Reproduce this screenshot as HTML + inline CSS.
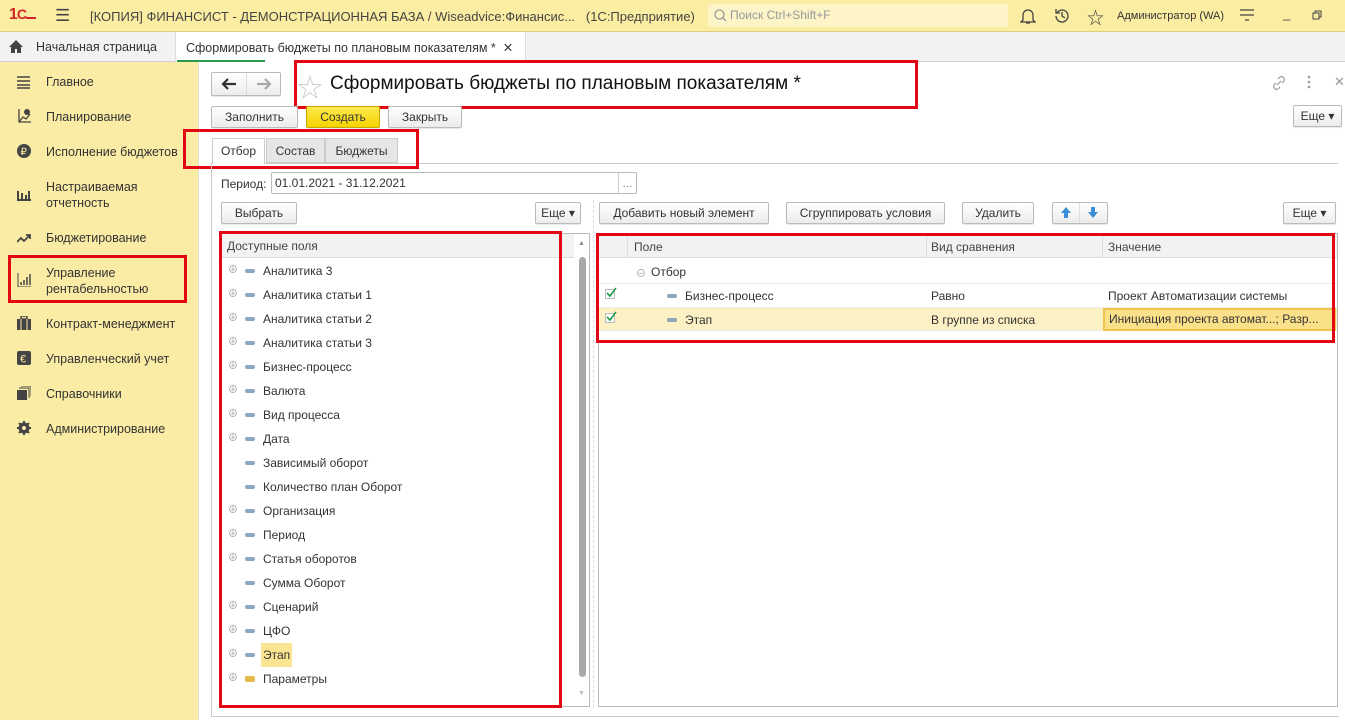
<!DOCTYPE html>
<html><head><meta charset="utf-8">
<style>
*{box-sizing:border-box;margin:0;padding:0}
body{width:1345px;height:720px;overflow:hidden;position:relative;background:#fff;font-family:"Liberation Sans","Noto Sans CJK SC",sans-serif;font-size:12px;color:#333}
.a{position:absolute}
.top{left:0;top:0;width:1345px;height:32px;background:#fbeda2;border-bottom:1px solid #e0cf80}
.tabs{left:0;top:32px;width:1345px;height:30px;background:#f2f2f2;border-bottom:1px solid #d0d0d0}
.side{left:0;top:62px;width:199px;height:658px;background:#fbeca5;border-right:1px solid #ddd}
.si{position:absolute;left:46px;font-size:12.5px;color:#333;line-height:16px}
.ic{position:absolute;left:17px;width:14px;height:14px}
.btn{position:absolute;height:22px;border:1px solid #bbb;border-radius:2px;background:linear-gradient(#fff,#ececec);font-size:12px;line-height:20px;text-align:center;color:#333;box-shadow:0 1px 1px rgba(0,0,0,.1)}
.red{position:absolute;border:3px solid #e30613}
.row{position:absolute;left:228px;height:24px;line-height:24px;font-size:12px}
.pl{position:absolute;left:0;color:#999;font-size:10px}
.dash{position:absolute;left:17px;top:10px;width:10px;height:4px;border-radius:2px;background:#8aa7bf}
.txt{position:absolute;left:35px;white-space:nowrap}
</style></head><body>
<div class="a top">
  <div class="a" style="left:9px;top:6px;color:#d0262a;font-weight:bold;font-size:16px;letter-spacing:-1px">1<span style="font-size:14px">C</span><span style="display:inline-block;width:10px;border-bottom:2px solid #d0262a"></span></div>
  <div class="a" style="left:55px;top:6px;font-size:17px;color:#444">☰</div>
  <div class="a" style="left:90px;top:9px;font-size:13px;color:#444">[КОПИЯ] ФИНАНСИСТ - ДЕМОНСТРАЦИОННАЯ БАЗА / Wiseadvice:Финансис...&nbsp;&nbsp;&nbsp;(1С:Предприятие)</div>
  <div class="a" style="left:708px;top:4px;width:300px;height:23px;background:#fdf4c8;border-radius:3px;color:#999;font-size:12px;line-height:23px;padding-left:22px">Поиск Ctrl+Shift+F
    <svg class="a" style="left:6px;top:5px" width="13" height="13"><circle cx="5.5" cy="5.5" r="4.5" fill="none" stroke="#999" stroke-width="1.3"/><path d="M9 9l3 3" stroke="#999" stroke-width="1.3"/></svg></div>
  <svg class="a" style="left:1020px;top:7px" width="16" height="18"><path d="M3 13V8a5 5 0 0110 0v5l2 2H1z M6 16h4" fill="none" stroke="#444" stroke-width="1.3"/></svg>
  <svg class="a" style="left:1053px;top:7px" width="18" height="18"><path d="M3 9a6 6 0 106-6 6 6 0 00-5 3 M3 2v4h4 M9 5v4l3 2" fill="none" stroke="#444" stroke-width="1.3"/></svg>
  <div class="a" style="left:1087px;top:4px;font-size:17px;color:#444">☆</div>
  <div class="a" style="left:1117px;top:10px;font-size:11px;color:#333">Администратор (WA)</div>
  <svg class="a" style="left:1240px;top:8px" width="14" height="16"><path d="M0 2h14M0 7h14M5 12h4" stroke="#444" stroke-width="1.3"/></svg>
  <div class="a" style="left:1283px;top:6px;font-size:13px;color:#444">_</div>
  <svg class="a" style="left:1312px;top:10px" width="10" height="10"><rect x="1" y="3" width="6" height="6" fill="none" stroke="#444"/><path d="M3 3V1h6v6H7" fill="none" stroke="#444"/></svg>
</div>
<div class="a tabs">
  <svg class="a" style="left:9px;top:8px" width="14" height="13"><path d="M7 0L0 7h2v6h4V9h2v4h4V7h2z" fill="#444"/></svg>
  <div class="a" style="left:36px;top:8px;font-size:12.5px">Начальная страница</div>
  <div class="a" style="left:175px;top:0;width:351px;height:30px;background:#fff;border-left:1px solid #ddd;border-right:1px solid #ddd"></div>
  <div class="a" style="left:177px;top:28px;width:88px;height:2px;background:#2a9a4c"></div>
  <div class="a" style="left:186px;top:8px;font-size:12.5px">Сформировать бюджеты по плановым показателям *&nbsp;&nbsp;✕</div>
</div>
<div class="a side">
  <svg class="ic" style="top:13px"><path d="M0 2h13M0 6h13M0 10h13M0 13h13" stroke="#444" stroke-width="1.6"/></svg><div class="si" style="top:12px">Главное</div>
  <svg class="ic" style="top:47px"><path d="M2 0v13h12M2 13l4-5 3 2 4-5" fill="none" stroke="#444" stroke-width="1.3"/><circle cx="10" cy="3" r="3" fill="#444"/></svg><div class="si" style="top:47px">Планирование</div>
  <svg class="ic" style="top:82px"><circle cx="7" cy="7" r="7" fill="#444"/><text x="3.5" y="11" font-size="10" fill="#fbeca5" font-family="Liberation Sans">₽</text></svg><div class="si" style="top:82px">Исполнение бюджетов</div>
  <svg class="ic" style="top:125px"><path d="M1 4v9M5 6v7M9 8v5M12 4v9M0 13h14" stroke="#444" stroke-width="2"/></svg><div class="si" style="top:117px">Настраиваемая<br>отчетность</div>
  <svg class="ic" style="top:169px"><path d="M0 11l4-4 3 3 6-6M9 4h4v4" fill="none" stroke="#444" stroke-width="1.8"/></svg><div class="si" style="top:168px">Бюджетирование</div>
  <svg class="ic" style="top:211px"><path d="M1 0v14h13" fill="none" stroke="#444"/><path d="M4 12v-3M7 12v-5M10 12V4M13 12V1" stroke="#444" stroke-width="1.5"/></svg><div class="si" style="top:203px">Управление<br>рентабельностью</div>
  <svg class="ic" style="top:254px"><rect x="0" y="3" width="14" height="11" fill="#444"/><rect x="4" y="0" width="6" height="3" fill="none" stroke="#444" stroke-width="1.5"/><path d="M4 3v11M10 3v11" stroke="#fbeca5"/></svg><div class="si" style="top:254px">Контракт-менеджмент</div>
  <svg class="ic" style="top:289px"><rect width="14" height="14" rx="2" fill="#444"/><text x="3" y="11.5" font-size="11" fill="#fbeca5" font-family="Liberation Sans">€</text></svg><div class="si" style="top:289px">Управленческий учет</div>
  <svg class="ic" style="top:324px"><rect x="0" y="4" width="10" height="10" fill="#444"/><path d="M2 2h10v10M4 0h10v10" fill="none" stroke="#444"/></svg><div class="si" style="top:324px">Справочники</div>
  <svg class="ic" style="top:359px"><circle cx="7" cy="7" r="4" fill="none" stroke="#444" stroke-width="3"/><path d="M7 0v14M0 7h14M2 2l10 10M12 2L2 12" stroke="#444" stroke-width="2"/><circle cx="7" cy="7" r="2" fill="#fbeca5"/></svg><div class="si" style="top:359px">Администрирование</div>
</div>
<div class="red" style="left:8px;top:255px;width:179px;height:48px"></div>

<!-- form header -->
<div class="btn" style="left:211px;top:72px;width:70px;height:24px"></div>
<div class="a" style="left:246px;top:73px;width:1px;height:22px;background:#ddd"></div>
<svg class="a" style="left:221px;top:78px" width="16" height="12"><path d="M15 6H3M7 1L2 6l5 5" fill="none" stroke="#333" stroke-width="2.2"/></svg>
<svg class="a" style="left:256px;top:78px" width="16" height="12"><path d="M1 6h12M9 1l5 5-5 5" fill="none" stroke="#aaa" stroke-width="2.2"/></svg>
<div class="a" style="left:297px;top:68px;font-size:26px;color:#ccc">☆</div>
<div class="a" style="left:330px;top:73px;font-size:19px;color:#111">Сформировать бюджеты по плановым показателям *</div>
<div class="red" style="left:294px;top:60px;width:624px;height:49px"></div>
<svg class="a" style="left:1271px;top:75px" width="16" height="16"><path d="M6 10l4-4M7 4l2-2a3 3 0 014 4l-2 2M9 12l-2 2a3 3 0 01-4-4l2-2" fill="none" stroke="#999" stroke-width="1.2"/></svg>
<svg class="a" style="left:1307px;top:75px" width="4" height="14"><circle cx="2" cy="2" r="1.3" fill="#999"/><circle cx="2" cy="7" r="1.3" fill="#999"/><circle cx="2" cy="12" r="1.3" fill="#999"/></svg>
<div class="a" style="left:1334px;top:74px;color:#999;font-size:13px">✕</div>
<div class="btn" style="left:211px;top:106px;width:87px">Заполнить</div>
<div class="btn" style="left:306px;top:106px;width:74px;background:linear-gradient(#ffe94d,#f5d300);border-color:#c8a800">Создать</div>
<div class="btn" style="left:388px;top:106px;width:74px">Закрыть</div>
<div class="btn" style="left:1293px;top:105px;width:49px">Еще ▾</div>
<!-- tabs -->
<div class="a" style="left:211px;top:163px;width:1127px;height:1px;background:#ccc"></div>
<div class="a" style="left:212px;top:138px;width:53px;height:26px;background:#fff;border:1px solid #ccc;border-bottom:none;line-height:24px;text-align:center">Отбор</div>
<div class="a" style="left:266px;top:138px;width:59px;height:25px;background:#e6e6e6;border:1px solid #ccc;line-height:24px;text-align:center">Состав</div>
<div class="a" style="left:325px;top:138px;width:73px;height:25px;background:#e6e6e6;border:1px solid #ccc;line-height:24px;text-align:center">Бюджеты</div>
<div class="red" style="left:183px;top:129px;width:236px;height:40px"></div>
<div class="a" style="left:211px;top:164px;width:1px;height:553px;background:#ccc"></div>
<div class="a" style="left:211px;top:716px;width:1128px;height:1px;background:#ccc"></div>
<!-- period -->
<div class="a" style="left:221px;top:177px">Период:</div>
<div class="a" style="left:271px;top:172px;width:366px;height:22px;border:1px solid #bbb;border-radius:2px;line-height:20px;padding-left:3px;color:#333">01.01.2021 - 31.12.2021<span style="position:absolute;right:0;top:0;width:18px;height:20px;border-left:1px solid #ccc;text-align:center;color:#888">...</span></div>
<!-- left panel -->
<div class="btn" style="left:221px;top:202px;width:76px">Выбрать</div>
<div class="btn" style="left:535px;top:202px;width:46px">Еще ▾</div>
<div class="a" style="left:593px;top:200px;width:1px;height:508px;border-left:1px dashed #ddd"></div>
<div class="a" style="left:221px;top:233px;width:369px;height:474px;border:1px solid #bbb"></div>
<div class="a" style="left:222px;top:234px;width:352px;height:24px;background:#f2f2f2;border-bottom:1px solid #ddd;line-height:24px;padding-left:5px;color:#444">Доступные поля</div>
<div class="a" style="left:578px;top:240px;font-size:7px;color:#888">▲</div>
<div class="a" style="left:579px;top:257px;width:7px;height:420px;background:#a8a8a8;border-radius:4px"></div>
<div class="a" style="left:578px;top:690px;font-size:7px;color:#bbb">▼</div>
<div class="row" style="top:259px"><span class="pl">⊕</span><span class="dash"></span><span class="txt">Аналитика 3</span></div>
<div class="row" style="top:283px"><span class="pl">⊕</span><span class="dash"></span><span class="txt">Аналитика статьи 1</span></div>
<div class="row" style="top:307px"><span class="pl">⊕</span><span class="dash"></span><span class="txt">Аналитика статьи 2</span></div>
<div class="row" style="top:331px"><span class="pl">⊕</span><span class="dash"></span><span class="txt">Аналитика статьи 3</span></div>
<div class="row" style="top:355px"><span class="pl">⊕</span><span class="dash"></span><span class="txt">Бизнес-процесс</span></div>
<div class="row" style="top:379px"><span class="pl">⊕</span><span class="dash"></span><span class="txt">Валюта</span></div>
<div class="row" style="top:403px"><span class="pl">⊕</span><span class="dash"></span><span class="txt">Вид процесса</span></div>
<div class="row" style="top:427px"><span class="pl">⊕</span><span class="dash"></span><span class="txt">Дата</span></div>
<div class="row" style="top:451px"><span class="dash"></span><span class="txt">Зависимый оборот</span></div>
<div class="row" style="top:475px"><span class="dash"></span><span class="txt">Количество план Оборот</span></div>
<div class="row" style="top:499px"><span class="pl">⊕</span><span class="dash"></span><span class="txt">Организация</span></div>
<div class="row" style="top:523px"><span class="pl">⊕</span><span class="dash"></span><span class="txt">Период</span></div>
<div class="row" style="top:547px"><span class="pl">⊕</span><span class="dash"></span><span class="txt">Статья оборотов</span></div>
<div class="row" style="top:571px"><span class="dash"></span><span class="txt">Сумма Оборот</span></div>
<div class="row" style="top:595px"><span class="pl">⊕</span><span class="dash"></span><span class="txt">Сценарий</span></div>
<div class="row" style="top:619px"><span class="pl">⊕</span><span class="dash"></span><span class="txt">ЦФО</span></div>
<div class="row" style="top:643px"><span class="pl">⊕</span><span class="dash"></span><span class="txt" style="background:#fbe592;padding:0 2px;left:33px">Этап</span></div>
<div class="row" style="top:667px"><span class="pl">⊕</span><span class="dash" style="background:#e5b94a;height:6px;top:9px"></span><span class="txt">Параметры</span></div>
<div class="red" style="left:219px;top:231px;width:343px;height:477px"></div>
<!-- right panel -->
<div class="btn" style="left:599px;top:202px;width:170px">Добавить новый элемент</div>
<div class="btn" style="left:786px;top:202px;width:159px">Сгруппировать условия</div>
<div class="btn" style="left:962px;top:202px;width:72px">Удалить</div>
<div class="btn" style="left:1052px;top:202px;width:56px"></div>
<div class="a" style="left:1079px;top:203px;width:1px;height:20px;background:#ddd"></div>
<svg class="a" style="left:1060px;top:206px" width="12" height="13"><path d="M6 1L1 7h3v5h4V7h3z" fill="#3a8fd8"/></svg>
<svg class="a" style="left:1087px;top:206px" width="12" height="13"><path d="M6 12L1 6h3V1h4v5h3z" fill="#3a8fd8"/></svg>
<div class="btn" style="left:1283px;top:202px;width:53px">Еще ▾</div>
<div class="a" style="left:598px;top:233px;width:740px;height:474px;border:1px solid #bbb"></div>
<div class="a" style="left:599px;top:234px;width:738px;height:24px;background:#f2f2f2;border-bottom:1px solid #ddd"></div>
<div class="a" style="left:627px;top:234px;width:1px;height:24px;background:#ddd"></div>
<div class="a" style="left:926px;top:234px;width:1px;height:24px;background:#ddd"></div>
<div class="a" style="left:1102px;top:234px;width:1px;height:24px;background:#ddd"></div>
<div class="a" style="left:634px;top:240px;color:#444">Поле</div>
<div class="a" style="left:931px;top:240px;color:#444">Вид сравнения</div>
<div class="a" style="left:1108px;top:240px;color:#444">Значение</div>
<div class="a" style="left:636px;top:265px;color:#999;font-size:10px">⊖</div>
<div class="a" style="left:651px;top:265px">Отбор</div>
<div class="a" style="left:599px;top:283px;width:738px;height:1px;background:#eee"></div>
<svg class="a" style="left:605px;top:287px" width="12" height="12"><rect x="0.5" y="2.5" width="9" height="9" fill="#fff" stroke="#bbb"/><path d="M2 6l3 3 6-8" fill="none" stroke="#1f9a4a" stroke-width="1.6"/></svg>
<div class="a" style="left:667px;top:294px;width:10px;height:4px;border-radius:2px;background:#8aa7bf"></div>
<div class="a" style="left:685px;top:289px">Бизнес-процесс</div>
<div class="a" style="left:931px;top:289px">Равно</div>
<div class="a" style="left:1108px;top:289px">Проект Автоматизации системы</div>
<div class="a" style="left:599px;top:307px;width:738px;height:24px;background:#fcf0c5;border-top:1px solid #eee;border-bottom:1px solid #eee"></div>
<svg class="a" style="left:605px;top:311px" width="12" height="12"><rect x="0.5" y="2.5" width="9" height="9" fill="#fff" stroke="#bbb"/><path d="M2 6l3 3 6-8" fill="none" stroke="#1f9a4a" stroke-width="1.6"/></svg>
<div class="a" style="left:667px;top:318px;width:10px;height:4px;border-radius:2px;background:#8aa7bf"></div>
<div class="a" style="left:685px;top:313px">Этап</div>
<div class="a" style="left:931px;top:313px">В группе из списка</div>
<div class="a" style="left:1103px;top:308px;width:233px;height:23px;background:#fbe08a;border:2px solid #ecc54a;line-height:19px;padding-left:4px;white-space:nowrap;overflow:hidden">Инициация проекта автомат...; Разр...</div>
<div class="red" style="left:596px;top:233px;width:739px;height:110px"></div>
</body></html>
